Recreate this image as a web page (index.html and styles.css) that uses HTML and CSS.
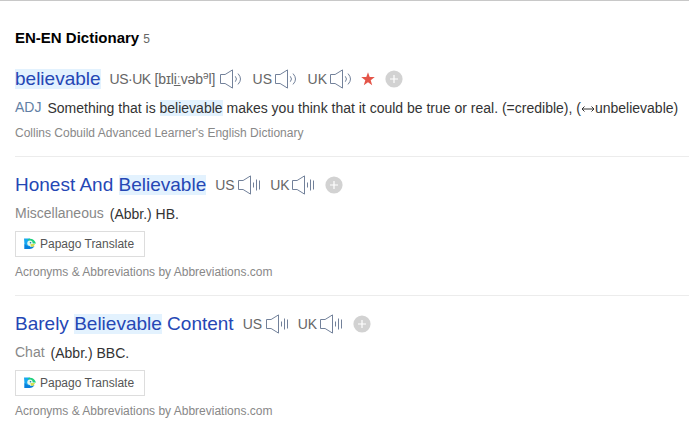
FILE: index.html
```
<!DOCTYPE html>
<html lang="en">
<head>
<meta charset="utf-8">
<title>EN-EN Dictionary</title>
<link rel="stylesheet" href="styles.css">
</head>
<body>
<svg class="defs" aria-hidden="true">
  <symbol id="wave" viewBox="0 0 23 20"><path d="M.5 5.500h4.600L12.500.9v18.200L5.100 14.500H.5z"/><path d="M15.300 7.300q2.400 2.700 0 5.400M18 4.600q5 5.400 0 10.800"/></symbol>
  <symbol id="bars" viewBox="0 0 23 20"><path d="M.5 5.500h4.600L12.500.9v18.200L5.100 14.500H.5z"/><path d="M15.500 7.500v5M18.500 4.500v11M21.500 5.500v9"/></symbol>
  <symbol id="plus" viewBox="0 0 18 18"><circle cx="9" cy="9" r="8.600" fill="#d2d2d2"/><path d="M9 5v8M5 9h8" stroke="#fff" stroke-width="1.200"/></symbol>
  <symbol id="papago" viewBox="0 0 12 12"><path d="M0 .5h6v10.500H.5V7z" fill="#18a8f0"/><path d="M3.500 1Q10-.5 12 5.500H8z" fill="#1fd07c"/><path d="M.5 11V6q4 4 10 2Q9 11 5.500 11z" fill="#087fdc"/><circle cx="6" cy="5.300" r="2.700" fill="#e9f8ee"/><circle cx="6.500" cy="4.800" r=".8" fill="#18799a"/><path d="M6.500 6H11L9.500 8.700H7z" fill="#d3df55"/></symbol>
</svg>
<main class="dictionary">
  <h1 class="heading">EN-EN Dictionary <span class="count">5</span></h1>
  <section class="entry first">
    <div class="headline">
      <a class="word"><mark>believable</mark></a>
      <span class="phonetic"><span class="locale">US·UK</span> [bɪl<u>iː</u>vəb<sup>ə</sup>l]</span><svg class="speaker"><use href="#wave"/></svg>
      <span class="region">US</span><svg class="speaker"><use href="#wave"/></svg>
      <span class="region">UK</span><svg class="speaker"><use href="#wave"/></svg>
      <svg class="star" viewBox="0 0 14 14"><path d="M7 .2l1.700 4.900h5.100L9.700 8.200l1.500 5L7 10.200l-4.200 3 1.500-5L.2 5.100h5.100z"/></svg>
      <svg class="plus"><use href="#plus"/></svg>
    </div>
    <p class="meaning"><span class="pos">ADJ</span><span class="text">Something that is <mark>believable</mark> makes you think that it could be true or real. (=credible), (<svg class="arrow" viewBox="0 0 14 8"><path d="M1 4h12M3.500 1.500L1 4l2.500 2.500M10.500 1.500L13 4l-2.500 2.500"/></svg>unbelievable)</span></p>
    <p class="source">Collins Cobuild Advanced Learner's English Dictionary</p>
  </section>
  <section class="entry">
    <div class="headline">
      <a class="word">Honest And <mark>Believable</mark></a>
      <span class="region">US</span><svg class="speaker"><use href="#bars"/></svg>
      <span class="region">UK</span><svg class="speaker"><use href="#bars"/></svg>
      <svg class="plus"><use href="#plus"/></svg>
    </div>
    <p class="meaning"><span class="category">Miscellaneous</span><span class="text">(Abbr.) HB.</span></p>
    <button class="translate"><svg class="papago"><use href="#papago"/></svg>Papago Translate</button>
    <p class="source">Acronyms &amp; Abbreviations by Abbreviations.com</p>
  </section>
  <section class="entry">
    <div class="headline">
      <a class="word">Barely <mark>Believable</mark> Content</a>
      <span class="region">US</span><svg class="speaker"><use href="#bars"/></svg>
      <span class="region">UK</span><svg class="speaker"><use href="#bars"/></svg>
      <svg class="plus"><use href="#plus"/></svg>
    </div>
    <p class="meaning"><span class="category">Chat</span><span class="text">(Abbr.) BBC.</span></p>
    <button class="translate"><svg class="papago"><use href="#papago"/></svg>Papago Translate</button>
    <p class="source">Acronyms &amp; Abbreviations by Abbreviations.com</p>
  </section>
</main>
</body>
</html>
```
FILE: styles.css
```
* { box-sizing: border-box; }
body { margin: 0; background: #fff; font-family: "Liberation Sans", Arial, sans-serif; color: #333; overflow: hidden; }
.defs { display: none; }
.dictionary { height: 448px; border-top: 1px solid #c8c8c8; padding: 27px 0 0 15px; }
.heading { margin: 0; height: 20px; line-height: 20px; font-size: 15px; color: #000; white-space: nowrap; }
.count { font-size: 12px; font-weight: 400; color: #666; }
.entry { height: 139px; padding-top: 16px; border-bottom: 1px solid #ececec; white-space: nowrap; }
.entry.first { height: 109px; padding-top: 19px; }
.entry:last-child { border-bottom: 0; }
.headline { display: flex; align-items: center; height: 24px; font-size: 14px; color: #666; }
.word { font-size: 19px; line-height: 24px; color: #2547b5; }
mark { background: #e3f2fe; color: inherit; }
.word mark { display: inline-block; line-height: 20px; }
.phonetic { margin-left: 9px; width: 110px; line-height: 20px; letter-spacing: -.1px; }
.locale { letter-spacing: -.5px; }
.phonetic sup { font-size: 10px; line-height: 0; vertical-align: 5px; }
.region { margin-left: 9px; width: 23px; }
.speaker { width: 23px; height: 20px; flex: none; fill: none; stroke: #72819a; stroke-width: 1; }
.speaker + .region { margin-left: 9px; width: 22px; }
.first .speaker + .region { margin-left: 10px; }
.star { width: 14px; height: 14px; margin-left: 8px; fill: #e45549; }
.plus { width: 18px; height: 18px; margin-left: 10px; flex: none; }
.meaning { display: flex; align-items: center; margin: 4px 0 0; height: 24px; font-size: 14px; line-height: 20px; }
.pos { color: #627fa5; margin-right: 6px; }
.category { color: #888; margin-right: 6px; }
.text { position: relative; top: 1px; }
.arrow { width: 14px; height: 8px; fill: none; stroke: #333; }
.source { margin: 5px 0 0; font-size: 12px; line-height: 18px; color: #888; }
.translate { display: flex; align-items: center; gap: 4px; width: 130px; height: 26px; margin: 6px 0 0; padding: 0 8px; border: 1px solid #ddd; background: #fff; color: #555; font: 12px "Liberation Sans", Arial, sans-serif; }
.papago { width: 12px; height: 12px; }
.translate + .source { margin-top: 6px; }
```
